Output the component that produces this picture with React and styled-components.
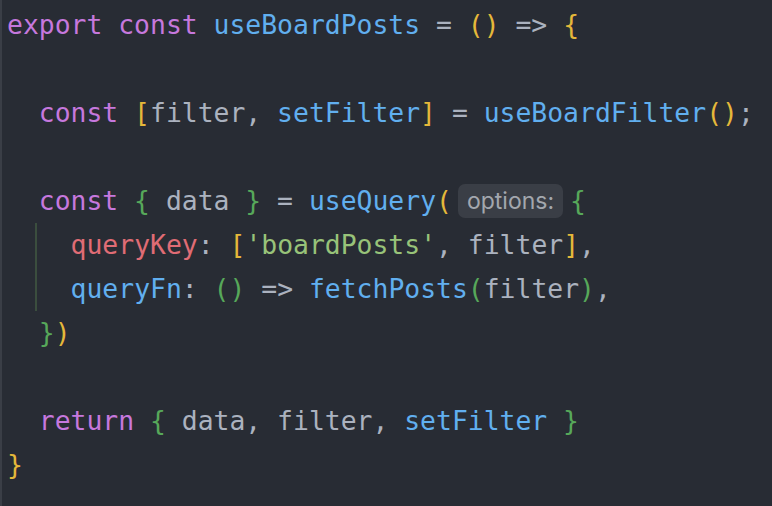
import React from "react";
import styled, { createGlobalStyle } from "styled-components";

const Global = createGlobalStyle`
  html, body { margin: 0; padding: 0; background: #282c34; }
  #root { min-height: 100vh; }
`;

const C = {
  kw: "#c678dd",
  fn: "#61afef",
  prop: "#e06c75",
  str: "#98c379",
  txt: "#abb2bf",
  y: "#e5b83a",
  g: "#57a85a",
};

const Editor = styled.div`
  box-sizing: border-box;
  width: 772px;
  height: 506px;
  background: #282c34;
  border-left: 2px solid #3a3e46;
  padding: 3px 0 0 5px;
  font-family: "DejaVu Sans Mono", "Liberation Mono", monospace;
  font-size: 26.4px;
  color: ${C.txt};
  overflow: hidden;
`;

const Line = styled.div`
  height: 44px;
  line-height: 44px;
  white-space: pre;
  display: flex;
  align-items: center;
`;

const T = styled.span`
  color: ${(p) => C[p.c] || C.txt};
`;

const Guide = styled.div`
  margin-left: 28px;
  border-left: 2px solid #3b4e3e;
  padding-left: 33.6px;
`;

const Hint = styled.span`
  display: inline-flex;
  align-items: center;
  height: 34px;
  padding: 0 9px;
  margin: 0 7px 0 6px;
  border-radius: 7px;
  background: #3a3e46;
  color: #a3a7ae;
  font-family: Inter, "Noto Sans", sans-serif;
  font-size: 23px;
  line-height: 1;
`;

export default function App() {
  return (
    <>
      <Global />
      <Editor>
        <Line>
          <T c="kw">export const </T>
          <T c="fn">useBoardPosts</T>
          <T> = </T>
          <T c="y">()</T>
          <T> =&gt; </T>
          <T c="y">{"{"}</T>
        </Line>
        <Line> </Line>
        <Line>
          <T c="kw">  const </T>
          <T c="y">[</T>
          <T>filter, </T>
          <T c="fn">setFilter</T>
          <T c="y">]</T>
          <T> = </T>
          <T c="fn">useBoardFilter</T>
          <T c="y">()</T>
          <T>;</T>
        </Line>
        <Line> </Line>
        <Line>
          <T c="kw">  const </T>
          <T c="g">{"{"}</T>
          <T> data </T>
          <T c="g">{"}"}</T>
          <T> = </T>
          <T c="fn">useQuery</T>
          <T c="y">(</T>
          <Hint>options:</Hint>
          <T c="g">{"{"}</T>
        </Line>
        <Guide>
          <Line>
            <T c="prop">queryKey</T>
            <T>: </T>
            <T c="y">[</T>
            <T c="str">'boardPosts'</T>
            <T>, filter</T>
            <T c="y">]</T>
            <T>,</T>
          </Line>
          <Line>
            <T c="fn">queryFn</T>
            <T>: </T>
            <T c="g">()</T>
            <T> =&gt; </T>
            <T c="fn">fetchPosts</T>
            <T c="g">(</T>
            <T>filter</T>
            <T c="g">)</T>
            <T>,</T>
          </Line>
        </Guide>
        <Line>
          <T>  </T>
          <T c="g">{"}"}</T>
          <T c="y">)</T>
        </Line>
        <Line> </Line>
        <Line>
          <T c="kw">  return </T>
          <T c="g">{"{"}</T>
          <T> data, filter, </T>
          <T c="fn">setFilter</T>
          <T> </T>
          <T c="g">{"}"}</T>
        </Line>
        <Line>
          <T c="y">{"}"}</T>
        </Line>
      </Editor>
    </>
  );
}
